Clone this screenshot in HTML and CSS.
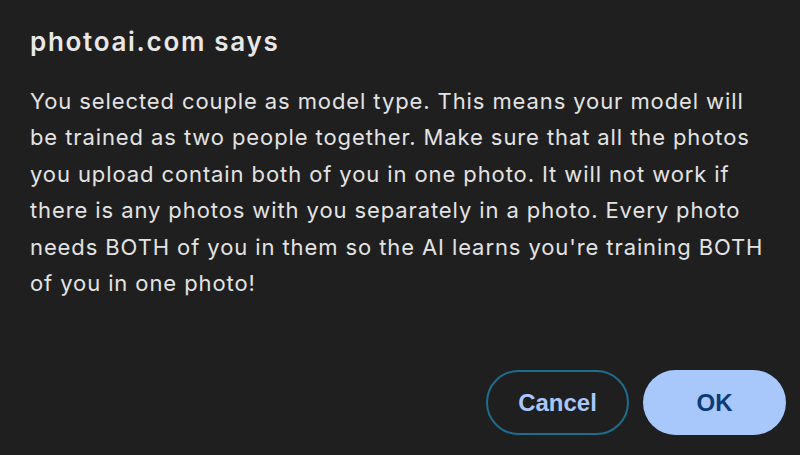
FILE: index.html
```html
<!DOCTYPE html>
<html>
<head>
<meta charset="utf-8">
<link rel="stylesheet" href="styles.css">
</head>
<body>
<div class="dialog">
  <h1 class="title">photoai.com says</h1>
  <p class="message">You selected couple as model type. This means your model will be trained as two people together. Make sure that all the photos you upload contain both of you in one photo. It will not work if there is any photos with you separately in a photo. Every photo needs BOTH of you in them so the AI learns you're training BOTH of you in one photo!</p>
  <div class="actions">
    <button class="btn btn-cancel">Cancel</button>
    <button class="btn btn-ok">OK</button>
  </div>
</div>
</body>
</html>
```
FILE: styles.css
```css
html, body {
  margin: 0;
  padding: 0;
  background: #1f1f1f;
}
.dialog {
  width: 800px;
  height: 455px;
  box-sizing: border-box;
  padding: 26px 14px 0 30px;
  font-family: Inter, "Noto Sans", sans-serif;
  color: #e3e3e3;
  display: flex;
  flex-direction: column;
}
.title {
  margin: 0;
  font-size: 26px;
  font-weight: 600;
  line-height: 32px;
  letter-spacing: 1.7px;
  color: #e8e8e8;
}
.message {
  margin: 25px 0 0 0;
  width: 745px;
  font-size: 22px;
  line-height: 36.4px;
  font-weight: 400;
  letter-spacing: 0.9px;
  color: #e3e3e3;
}
.actions {
  margin-top: auto;
  margin-bottom: 20px;
  display: flex;
  justify-content: flex-end;
  gap: 14px;
}
.btn {
  width: 143px;
  height: 65px;
  border-radius: 33px;
  font-family: "Liberation Sans", Arial, sans-serif;
  font-size: 24px;
  font-weight: 700;
  box-sizing: border-box;
  padding: 0;
}
.btn-cancel {
  background: transparent;
  border: 2px solid #1d6d8e;
  color: #a8c7fa;
}
.btn-ok {
  background: #a8c7fa;
  border: none;
  color: #0b3b77;
}
```
